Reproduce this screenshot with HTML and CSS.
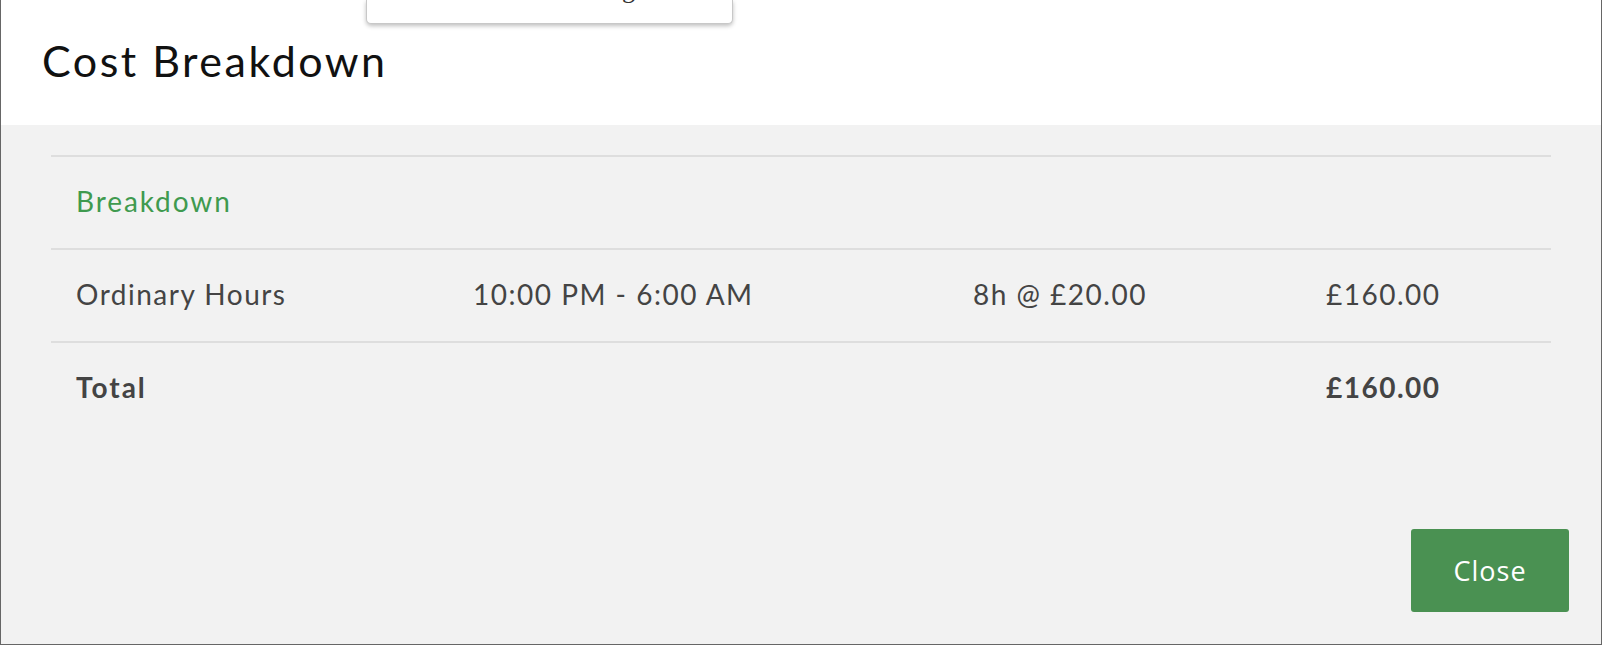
FILE: index.html
```html
<!DOCTYPE html>
<html lang="en">
<head>
<meta charset="utf-8">
<title>Cost Breakdown</title>
<link rel="stylesheet" href="styles.css">
</head>
<body>
<div class="modal">
  <header class="modal-header">
    <h1 class="modal-title">Cost Breakdown</h1>
  </header>
  <main class="modal-body">
    <div class="row row-heading">
      <div class="cell heading">Breakdown</div>
    </div>
    <div class="row">
      <div class="cell">Ordinary Hours</div>
      <div class="cell">10:00 PM - 6:00 AM</div>
      <div class="cell">8h @ £20.00</div>
      <div class="cell">£160.00</div>
    </div>
    <div class="row row-total">
      <div class="cell">Total</div>
      <div class="cell"></div>
      <div class="cell"></div>
      <div class="cell">£160.00</div>
    </div>
  </main>
  <footer class="modal-footer">
    <button class="btn-close" type="button">Close</button>
  </footer>
</div>
<div class="popup"><span class="popup-text">Pricing</span></div>
</body>
</html>
```
FILE: styles.css
```css
html, body {
  margin: 0;
  padding: 0;
}
body {
  background: #666666;
  width: 1602px;
  height: 645px;
  overflow: hidden;
  position: relative;
  font-family: "Lato", "Noto Sans", sans-serif;
}
.modal {
  margin: 0 1px 0 1px;
  height: 644px;
  background: #f2f2f2;
  display: flex;
  flex-direction: column;
}
.modal-header {
  background: #ffffff;
  height: 125px;
  box-sizing: border-box;
  padding: 0 0 4px 41px;
  display: flex;
  align-items: center;
}
.modal-title {
  margin: 0;
  font-weight: 400;
  font-size: 43px;
  color: #111111;
  letter-spacing: 2.5px;
}
.modal-body {
  padding: 30px 50px 0 50px;
}
.row {
  display: grid;
  grid-template-columns: 397px 500px 353px 1fr;
  height: 93px;
  box-sizing: border-box;
  border-top: 2px solid #dedede;
  padding-bottom: 4px;
  align-items: center;
}
.cell {
  padding-left: 25px;
  font-size: 28px;
  color: #444444;
  letter-spacing: 1.5px;
  white-space: nowrap;
}
.heading {
  color: #3f9a4f;
  grid-column: 1 / 5;
  letter-spacing: 1.9px;
}
.row-total .cell {
  font-weight: 700;
  letter-spacing: 1.5px;
}
.row-total .cell:first-child {
  letter-spacing: 2px;
}
.modal-footer {
  margin-top: auto;
  display: flex;
  justify-content: flex-end;
  padding: 0 32px 32px 0;
}
.btn-close {
  width: 158px;
  height: 83px;
  background: #4a9152;
  color: #ffffff;
  border: none;
  border-radius: 3px;
  font-family: "Open Sans", "Lato", sans-serif;
  font-size: 27px;
  letter-spacing: 1px;
  padding: 0;
}
.popup {
  position: absolute;
  left: 366px;
  top: 0;
  width: 367px;
  height: 24px;
  box-sizing: border-box;
  background: #ffffff;
  border: 1px solid #c8c8c8;
  border-top: none;
  border-radius: 0 0 5px 5px;
  box-shadow: 0 2px 4px rgba(0, 0, 0, 0.25);
  overflow: hidden;
}
.popup-text {
  position: absolute;
  right: 97px;
  top: -25px;
  font-family: "Liberation Serif", serif;
  font-size: 26px;
  color: #333333;
}
```
